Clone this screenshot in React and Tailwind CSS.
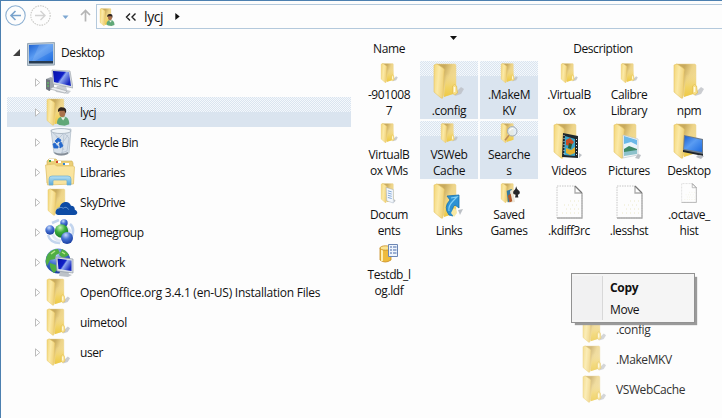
import React from 'react';

const DITHER =
  'bg-[linear-gradient(to_bottom,transparent_15px,#dae4ef_15px),repeating-conic-gradient(#dae4ef_0_25%,#f4f8fc_0_50%)] bg-[size:100%_100%,2px_2px]';

function Defs() {
  return (
    <svg className="absolute h-0 w-0" aria-hidden="true">
      <defs>
        <linearGradient id="leaf" x1="0" x2="1" y1="0" y2="0.3">
          <stop offset="0" stopColor="#f3d677" />
          <stop offset="0.5" stopColor="#fbe9a6" />
          <stop offset="1" stopColor="#f0d27a" />
        </linearGradient>
        <linearGradient id="back" x1="0" x2="1" y1="0" y2="0.6">
          <stop offset="0.35" stopColor="#c9ab5e" />
          <stop offset="0.65" stopColor="#edd489" />
          <stop offset="1" stopColor="#f3dc94" />
        </linearGradient>
        <linearGradient id="front" x1="0" x2="0" y1="0" y2="1">
          <stop offset="0" stopColor="#f3dc94" stopOpacity="0" />
          <stop offset="0.6" stopColor="#f1d366" />
          <stop offset="1" stopColor="#edc945" />
        </linearGradient>
        <linearGradient id="screen" x1="0" x2="1" y1="0" y2="1">
          <stop offset="0" stopColor="#1b5fd0" />
          <stop offset="0.45" stopColor="#5a9cf2" />
          <stop offset="1" stopColor="#1d6be0" />
        </linearGradient>
        <linearGradient id="deep" x1="0" x2="1" y1="0" y2="0.6">
          <stop offset="0" stopColor="#0811a8" />
          <stop offset="0.5" stopColor="#1020c8" />
          <stop offset="0.6" stopColor="#8fa8f0" />
          <stop offset="1" stopColor="#1828c0" />
        </linearGradient>
        <linearGradient id="glass" x1="0" x2="0" y1="0" y2="1">
          <stop offset="0" stopColor="#b5e0f5" />
          <stop offset="1" stopColor="#5ba9d8" />
        </linearGradient>
        <radialGradient id="blueBall" cx="0.4" cy="0.25" r="0.8">
          <stop offset="0" stopColor="#c4d8fb" />
          <stop offset="0.45" stopColor="#4470d2" />
          <stop offset="1" stopColor="#14389a" />
        </radialGradient>
        <radialGradient id="greenBall" cx="0.4" cy="0.25" r="0.8">
          <stop offset="0" stopColor="#c8f4b8" />
          <stop offset="0.45" stopColor="#3cae3c" />
          <stop offset="1" stopColor="#127024" />
        </radialGradient>
      </defs>
    </svg>
  );
}

const OVERLAYS = {
  plain: (
    <g>
      <path d="M22 29l5-5 3 2-3 5-6 2z" fill="#b9bcc2" opacity=".75" />
      <path d="M18.500 23q2-3 4 0l1 7-3 2-2-2z" fill="#f8e08a" stroke="#e3bd4c" strokeWidth=".7" />
      <path d="M20.500 24v5" stroke="#fffbe5" strokeWidth="1.500" />
    </g>
  ),
  user: (
    <g>
      <path d="M13 33c0-6 3-9 8-9s8 3 8 10l-6 2-7-1z" fill="#61a878" />
      <path d="M18 25l3 4 3-4z" fill="#e8f3e4" />
      <ellipse cx="20" cy="19" rx="4" ry="5.500" fill="#a9714c" />
      <path d="M14.500 18c-1-5 3-7 6-6 4 0 5.500 3 4 8l-2-4c-3 1-5-1-8 2z" fill="#30251f" />
    </g>
  ),
  cloud: (
    <g fill="#0d4ba4">
      <path d="M13 35q-4-1-3-5 1-4 5-4 1-7 7-8 6-1 8 5 5 0 5 5 4 2 3 5-1 2-4 2z" />
      <path d="M11 28q3-5 9-2 4-3 7 2" fill="none" stroke="#7ba7dc" strokeWidth="1" />
    </g>
  ),
  search: (
    <g>
      <circle cx="20" cy="15" r="8.500" fill="#e3edf7" fillOpacity=".85" stroke="#9eaab8" strokeWidth="1.800" />
      <path d="M14 22l-7 9" stroke="#bd8e58" strokeWidth="3" />
      <path d="M15 14q2-5 7-4" fill="none" stroke="#fff" strokeWidth="2" />
    </g>
  ),
  video: (
    <g>
      <path d="M9 10l15 3v22L8 34z" fill="#20282c" />
      <path d="M11 13l10 3v17l-11-1z" fill="#3aa3c8" />
      <path d="M12 17l4-2 4 4-3 4-5-1z" fill="#c64d24" />
      <path d="M12 25l5 2 4-3v6l-5 2-4-2z" fill="#e2b12e" />
      <path d="M15 20l3 1-1 5-3-1z" fill="#27572e" />
      <path d="M10 12v20M22.500 16v17" stroke="#d3dade" strokeWidth="1" strokeDasharray="1 2" />
      <path d="M25 30l3 2-3 3z" fill="#bcc0c5" />
    </g>
  ),
  picture: (
    <g>
      <path d="M9 12l15 4v16l-15 3z" fill="#f3f6f8" stroke="#b7c3cb" strokeWidth=".6" />
      <path d="M10 13l13 4v7l-13 2z" fill="#6bb8e8" />
      <path d="M10 21l7-2 6 3v3l-13 2z" fill="#e8f4fa" />
      <path d="M10 26l5-3 8 3v3l-13 2z" fill="#3e8a68" />
      <path d="M10 29l13-2v4l-13 2z" fill="#8ec2cc" />
      <path d="M24 31l3 1-2 4-4-1z" fill="#bcc0c5" />
    </g>
  ),
  monitor: (
    <g>
      <path d="M10 12l19 4v16L9 28z" fill="#6d7b8b" />
      <path d="M11 13l17 4v12l-18-3z" fill="url(#screen)" />
      <path d="M9 27l20 4v2L9 29z" fill="#20262c" />
      <path d="M24 32l6 1-3 3-5-2z" fill="#b9bcc2" />
    </g>
  ),
  docs: (
    <g>
      <path d="M9 8l13 4v24l-12-4z" fill="#f4f8fd" stroke="#99a6b8" strokeWidth=".8" />
      <path d="M12 14l7 2M12 18l7 2M12 22l7 2M12 26l7 2" stroke="#6f9bd1" strokeWidth="1.500" />
      <path d="M23 29l3 3-3 3z" fill="#bcc0c5" />
    </g>
  ),
  link: (
    <g>
      <path d="M13 13l12-1v13l-4-3q-4 3-2 11l-4-1q-6-8 1-15z" fill="#2d92d4" stroke="#1670ad" strokeWidth=".8" />
      <path d="M17 15l6-1-4 4q-5 5-4 10" fill="none" stroke="#82cff5" strokeWidth="1.200" />
      <path d="M19 26q3-2 4 4l-3 4-3-4z" fill="#f8e9a4" />
      <path d="M24 27l5-1-3 6z" fill="#bcc0c5" />
    </g>
  ),
  games: (
    <g>
      <path d="M10 14l9-3v21l-7 3z" fill="#347aa0" />
      <path d="M16 14l5-2 4 22-8 1z" fill="#ece5d7" />
      <path d="M12 23l5-4 3 14-5 2z" fill="#b3592a" />
      <path d="M27 6q0 4 6 9 2 5-3 6l1 5h-6l1-5q-6 0-4-6 5-5 5-9z" fill="#26262a" />
    </g>
  ),
};

function Folder({ kind = 'plain', className }) {
  return (
    <svg viewBox="0 0 30 36" className={`overflow-visible ${className}`}>
      <path d="M2 1h19l1 1v28l-12 3-8-5z" fill="url(#back)" stroke="#ecd793" strokeWidth=".5" />
      <path d="M12 12l10-3v21l-12 4z" fill="url(#front)" />
      <path d="M0 2l3-1 6 4q2 1 1 4l-1 25q0 2-2 1l-7-6z" fill="url(#leaf)" stroke="#e6c564" strokeWidth=".6" />
      {OVERLAYS[kind]}
    </svg>
  );
}

function FilePage({ className }) {
  return (
    <svg viewBox="0 0 27 34" className={className}>
      <path d="M1 1h18l7 7v25H1z" fill="#fdfdfd" stroke="#c6c6c6" strokeWidth="1" strokeDasharray="1.500 1" />
      <path d="M19 1v7h7M26 8v25H1" fill="none" stroke="#ababab" strokeWidth="1.300" />
      <path d="M19 1l7 7" stroke="#777" strokeWidth="1.200" />
      <path d="M8 20h15M14 16h9M10 24h13M6 28h17" stroke="#ebe8c8" strokeWidth="1" strokeDasharray="1 3" />
    </svg>
  );
}

function Database() {
  return (
    <svg viewBox="0 0 20 20" className="h-5 w-5">
      <path d="M1 5v12q5 4 11 0V5z" fill="#eebb3d" stroke="#c88c1e" strokeWidth=".8" />
      <path d="M3 6v12" stroke="#fff0b0" strokeWidth="2" />
      <ellipse cx="6.500" cy="5" rx="5.500" ry="2.200" fill="#fbe493" stroke="#c88c1e" strokeWidth=".8" />
      <path d="M9.500 1.500h9v12h-9z" fill="#eef4fc" stroke="#6c86b4" />
      <path d="M11 4h2M14 4h3.500M11 7h2M14 7h3.500M11 10h2M14 10h3.500" stroke="#4668a8" strokeWidth="1.200" />
    </svg>
  );
}

function DesktopIcon() {
  return (
    <svg viewBox="0 0 28 24" className="h-6 w-7">
      <path d="M.5 1.500l27-1v22.500l-27 .5z" fill="#bccbd8" stroke="#98a8b5" />
      <path d="M2 3l24-1v17.500H2z" fill="url(#screen)" />
      <path d="M12 3l14-1v7L8 19H5z" fill="#fff" opacity=".12" />
      <path d="M2 19h24v2.500H2z" fill="#263b52" />
    </svg>
  );
}

function PcIcon() {
  return (
    <svg viewBox="0 0 28 26" className="h-[26px] w-7">
      <path d="M1 10l5-2 3 2v9l-5 3-3-2z" fill="#9fa5ac" />
      <path d="M1 10l4 1v11l-4-2z" fill="#6e747c" />
      <path d="M2 14h2M2 17h2" stroke="#5ed05c" />
      <path d="M12 17h9l1 4 4 1-3 3-12-2-1-2z" fill="#c9cdd2" />
      <path d="M7 1l18 1 3 17-20-4z" fill="#d8dde2" stroke="#969da6" strokeWidth=".6" />
      <path d="M8 2l16 1 2 14-17-4z" fill="url(#deep)" />
      <path d="M8 18l14 4-2 2-15-4z" fill="#eceef0" stroke="#a0a5aa" strokeWidth=".6" />
    </svg>
  );
}

function BinIcon() {
  return (
    <svg viewBox="0 0 24 28" className="h-7 w-6">
      <path d="M2 2l20-1-2 24q-8 4-15 0z" fill="#d8e1ea" stroke="#b3bfca" strokeWidth=".8" />
      <ellipse cx="12" cy="3" rx="10" ry="2.500" fill="#eef3f7" stroke="#a0adba" strokeWidth=".8" />
      <path d="M4 5l6 5 5-5 5 5-2 13-6 2M15 6l-2 20M19 7l-9 13M7 8l8 14" stroke="#b5c2d0" strokeWidth=".8" fill="none" />
      <path d="M5 24q7 3 14 0v2q-7 3-13 0z" fill="#858e98" />
      <path d="M6 13l3-3 3 2-1 2-2-1-1 2zM12 14l2 4-3 2v-2l-1-2zM9 20H5l-1-4 2-1 2 3h1z" fill="#2468cc" stroke="#2468cc" strokeWidth=".8" />
    </svg>
  );
}

function LibrariesIcon() {
  return (
    <svg viewBox="0 0 30 28" className="h-7 w-[30px]">
      <path d="M2 3l2-2h7l2 2h14l1 2v20H2z" fill="#eccf78" stroke="#cfae50" strokeWidth=".6" />
      <path d="M4 1h5v2H4zM13 3h3v2h-3zM20 5h4v2h-4z" fill="#fff" />
      <path d="M4 2h2v2H4z" fill="#3fa24c" />
      <path d="M11 3h2v2h-2z" fill="#d3452c" />
      <path d="M18 5h2v2h-2z" fill="#3585cf" />
      <path d="M.5 7l9-1 2 2h17l1 1-1 17-26 1z" fill="#f9e49f" stroke="#dfbf63" strokeWidth=".7" />
      <path d="M4 27v-6q0-3 3-3h16q3 0 3 3v6h-4v-4q0-1-1-1H9q-1 0-1 1v4z" fill="url(#glass)" stroke="#6baed3" strokeWidth=".7" />
    </svg>
  );
}

function HomegroupIcon() {
  return (
    <svg viewBox="0 0 30 26" className="h-[26px] w-[30px]">
      <path d="M3 16q2 8 12 8M27 17q3-8-2-12M7 4l7-3" fill="none" stroke="#c3d5ee" strokeWidth="2.500" />
      <path d="M7 14q3 8 9 8M20 7l6 6" fill="none" stroke="#dfe8f5" strokeWidth="3" />
      <circle cx="19" cy="4" r="3.700" fill="url(#blueBall)" />
      <circle cx="5" cy="11" r="4.700" fill="url(#blueBall)" />
      <circle cx="16.500" cy="12" r="6.800" fill="url(#greenBall)" />
      <circle cx="22" cy="19" r="6" fill="url(#blueBall)" />
    </svg>
  );
}

function NetworkIcon() {
  return (
    <svg viewBox="0 0 30 29" className="h-[29px] w-[30px]">
      <circle cx="13" cy="13" r="12.500" fill="url(#blueBall)" />
      <path d="M3 6q4-5 10-5l2 4-4 2-1 4-5 1-3 6q-3-6 1-12zM17 1q5 2 7 6l-6 3-4-3zM5 15l6 2 1 5-3 3q-5-4-4-10z" fill="#4fae43" />
      <path d="M6 6l4-3M17 4l3 2" stroke="#b6e78a" strokeWidth="1.500" />
      <path d="M15 23h8l1 3 3 1-4 2-9-1z" fill="#bcc2c8" />
      <path d="M11 9l17 2v14l-16-2z" fill="#dbe0e6" stroke="#8f99a3" strokeWidth=".7" />
      <path d="M12.500 10.500l14 2v10.500l-13-2z" fill="url(#deep)" />
    </svg>
  );
}

const treeFolder = <Folder className="ml-0.5 h-7 w-[23px]" />;

const TREE = [
  { name: 'This PC', icon: <PcIcon /> },
  { name: 'lycj', icon: <Folder kind="user" className="ml-0.5 h-7 w-[23px]" />, selected: true },
  { name: 'Recycle Bin', icon: <span className="ml-1"><BinIcon /></span> },
  { name: 'Libraries', icon: <LibrariesIcon /> },
  { name: 'SkyDrive', icon: <Folder kind="cloud" className="ml-[3px] h-7 w-[23px]" /> },
  { name: 'Homegroup', icon: <HomegroupIcon /> },
  { name: 'Network', icon: <NetworkIcon /> },
  { name: 'OpenOffice.org 3.4.1 (en-US) Installation Files', icon: treeFolder, tracking: 'tracking-[-0.25px]' },
  { name: 'uimetool', icon: treeFolder },
  { name: 'user', icon: treeFolder },
];

const FILES = [
  { lines: ['-901008', '7'] },
  { lines: ['.config'], selected: true },
  { lines: ['.MakeM', 'KV'], selected: true },
  { lines: ['.VirtualB', 'ox'] },
  { lines: ['Calibre', 'Library'] },
  { lines: ['npm'] },
  { lines: ['VirtualB', 'ox VMs'] },
  { lines: ['VSWeb', 'Cache'], selected: true },
  { lines: ['Searche', 's'], kind: 'search', selected: true },
  { lines: ['Videos'], kind: 'video' },
  { lines: ['Pictures'], kind: 'picture' },
  { lines: ['Desktop'], kind: 'monitor' },
  { lines: ['Docum', 'ents'], kind: 'docs' },
  { lines: ['Links'], kind: 'link' },
  { lines: ['Saved', 'Games'], kind: 'games' },
  { lines: ['.kdiff3rc'], kind: 'file' },
  { lines: ['.lesshst'], kind: 'file' },
  { lines: ['.octave_', 'hist'], kind: 'file' },
  { lines: ['Testdb_l', 'og.ldf'], kind: 'db' },
];

function FileIcon({ kind, small }) {
  if (kind === 'db') return <Database />;
  if (kind === 'file')
    return <FilePage className={small ? 'h-5 w-4' : 'mt-0.5 h-[34px] w-[27px]'} />;
  return <Folder kind={kind} className={small ? 'h-5 w-[17px]' : 'h-9 w-[30px]'} />;
}

function FileTile({ lines, kind, selected }) {
  const small = lines.length > 1;
  return (
    <div className={`flex h-[58px] w-[58px] flex-col items-center pt-0.5 ${selected ? DITHER : ''}`}>
      <div className={`flex justify-center ${small ? 'h-[23px]' : 'h-[39px]'}`}>
        <FileIcon kind={kind} small={small} />
      </div>
      {lines.map((l) => (
        <span key={l} className="h-4 whitespace-nowrap leading-[18px]">{l}</span>
      ))}
    </div>
  );
}

function AddressBar() {
  return (
    <div className="flex h-7 items-start pl-1 pt-[3px]">
      <svg viewBox="0 0 88 24" className="h-6 w-[88px] shrink-0" fill="none">
        <circle cx="10.500" cy="11.500" r="9.700" stroke="#8db0d2" strokeWidth="1.100" />
        <path d="M16 11.500H6M10.500 7L6 11.500l4.500 4.500" stroke="#7aa3cc" strokeWidth="1.600" />
        <circle cx="35.500" cy="11.500" r="9.700" stroke="#c9c9c6" strokeWidth="1.100" strokeDasharray="1.500 1" />
        <path d="M30 11.500h10M35.500 7l4.500 4.500-4.500 4.500" stroke="#d2d2d2" strokeWidth="1.400" />
        <path d="M57.500 11.500h6l-3 3.500z" fill="#7da7d2" />
        <path d="M80.500 17.500V7M76 11l4.500-4.500L85 11" stroke="#b5b5b5" strokeWidth="1.700" />
      </svg>
      <div className="ml-[3px] flex h-[25px] grow items-center border border-r-0 border-[#b4c9dc] bg-[#fdfdfd] pl-[3px]">
        <Folder kind="user" className="h-[18px] w-[15px]" />
        <svg viewBox="0 0 12 8" className="ml-[10px] h-2 w-3" fill="none">
          <path d="M5 .5L1.500 4 5 7.500M10.500.5L7 4l3.500 3.500" stroke="#222" strokeWidth="1.400" />
        </svg>
        <span className="ml-[7px] text-[14px] leading-5 tracking-[-0.4px]">lycj</span>
        <svg viewBox="0 0 5 8" className="ml-3 h-[7px] w-[5px]">
          <path d="M0 0l5 4-5 4z" fill="#111" />
        </svg>
      </div>
    </div>
  );
}

function Tree() {
  return (
    <div className="flex w-[344px] shrink-0 flex-col pt-2">
      <div className="flex h-[30px] items-center">
        <svg viewBox="0 0 7 7" className="ml-1.5 mr-[7px] h-[7px] w-[7px]">
          <path d="M7 0v7H0z" fill="#404040" />
        </svg>
        <div className="flex w-[34px] pt-1">
          <DesktopIcon />
        </div>
        <span className="pt-0.5">Desktop</span>
      </div>
      {TREE.map((n) => (
        <div key={n.name} className={`flex h-[30px] items-center ${n.selected ? DITHER : ''}`}>
          <svg viewBox="0 0 6 9" className="ml-7 mr-1 h-[9px] w-1.5 shrink-0">
            <path d="M.5.8v7.400L4.800 4.500z" fill="#fff" stroke="#b5b5b5" strokeWidth=".9" />
          </svg>
          <div className="flex w-[35px] shrink-0 items-center">{n.icon}</div>
          <span className={`whitespace-nowrap pt-0.5 ${n.tracking ?? ''}`}>{n.name}</span>
        </div>
      ))}
    </div>
  );
}

function DragGhost() {
  return (
    <div className="absolute left-[582px] top-[313px] flex flex-col text-[#333]">
      {['.config', '.MakeMKV', 'VSWebCache'].map((n) => (
        <div key={n} className="flex h-[30px] items-center">
          <Folder className="h-7 w-[23px] opacity-80" />
          <span className="ml-2.5 pt-0.5">{n}</span>
        </div>
      ))}
    </div>
  );
}

function DropMenu() {
  return (
    <div className="absolute left-[570px] top-[272px] flex h-[50px] w-[124px] border border-[#929292] bg-[#f5f5f5] shadow-[3px_3px_1px_-1px_#9a9a9a]">
      <div className="my-0.5 w-[31px] border-r border-[#d8d8d8] bg-[#f1f1f2]" />
      <div className="flex flex-col pl-[7px] pt-[3px]">
        <span className="h-[22px] font-bold leading-[22px] tracking-[-0.3px]">Copy</span>
        <span className="h-[22px] leading-[22px]">Move</span>
      </div>
    </div>
  );
}

export default function App() {
  return (
    <div className="relative h-[418px] w-[722px] overflow-hidden border-l border-t border-[#4c80b0] bg-[#fdfdfd] font-['Open_Sans','Noto_Sans',sans-serif] text-[12px] tracking-[-0.4px] text-[#111]">
      <Defs />
      <AddressBar />
      <div className="flex pl-1.5">
        <Tree />
        <div className="flex flex-col pl-[9px]">
          <div className="flex h-8 flex-col">
            <svg viewBox="0 0 7 4" className="ml-[90px] mt-[7px] h-1 w-[7px]">
              <path d="M0 0h7L3.500 4z" fill="#111" />
            </svg>
            <div className="flex pt-px leading-[16px]">
              <span className="w-[58px] text-center">Name</span>
              <span className="ml-[127px] w-[116px] text-center">Description</span>
            </div>
          </div>
          <div className="grid grid-cols-[repeat(6,58px)] gap-0.5">
            {FILES.map((f) => (
              <FileTile key={f.lines.join('')} {...f} />
            ))}
          </div>
        </div>
      </div>
      <DragGhost />
      <DropMenu />
    </div>
  );
}
